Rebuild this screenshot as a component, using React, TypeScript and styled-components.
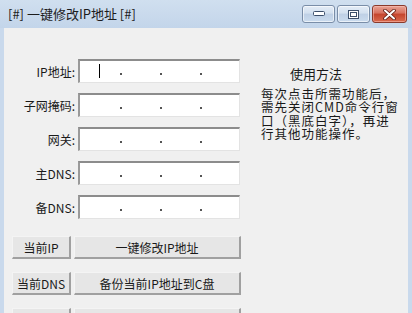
import styled, { createGlobalStyle } from 'styled-components';

const GlobalStyle = createGlobalStyle`
  html, body {
    margin: 0;
    padding: 0;
    background: #f0f0f0;
  }
  body {
    font-family: "Noto Sans CJK SC", "DejaVu Sans", sans-serif;
    font-size: 12px;
    color: #1a1a1a;
  }
`;

const fields = ['IP地址:', '子网掩码:', '网关:', '主DNS:', '备DNS:'];

const helpLines = [
  '每次点击所需功能后，',
  '需先关闭CMD命令行窗',
  '口（黑底白字），再进',
  '行其他功能操作。',
];

const App = () => {
  return (
    <>
      <GlobalStyle />
      <Window>
        <TitleBar>
          <Title>[#] 一键修改IP地址 [#]</Title>
          <Controls>
            <CtrlButton>
              <svg width="12" height="6" viewBox="0 0 12 6">
                <rect x="0.5" y="0.5" width="11" height="4" rx="1" fill="#fff" stroke="#3c4f6a" />
              </svg>
            </CtrlButton>
            <CtrlButton>
              <svg width="11" height="9" viewBox="0 0 11 9">
                <rect x="0.5" y="0.5" width="10" height="8" fill="#fff" stroke="#3c4f6a" />
                <rect x="2.5" y="2.5" width="6" height="4" fill="none" stroke="#3c4f6a" />
              </svg>
            </CtrlButton>
            <CloseButton>
              <svg width="13" height="11" viewBox="0 0 13 11">
                <path d="M2 1.5 L11 9.5 M11 1.5 L2 9.5" stroke="#5a1a10" strokeWidth="3.6" strokeLinecap="round" />
                <path d="M2 1.5 L11 9.5 M11 1.5 L2 9.5" stroke="#fff" strokeWidth="2" strokeLinecap="round" />
              </svg>
            </CloseButton>
          </Controls>
        </TitleBar>
        <Client>
          <LeftCol>
            <Form>
              {fields.map((label, i) => (
                <FieldRow key={label}>
                  <Label>{label}</Label>
                  <IpBox>
                    {i === 0 && <Caret />}
                    <Dot />
                    <Dot />
                    <Dot />
                  </IpBox>
                </FieldRow>
              ))}
            </Form>
            <Buttons>
              <ButtonRow>
                <SmallButton>当前IP</SmallButton>
                <WideButton>一键修改IP地址</WideButton>
              </ButtonRow>
              <ButtonRow>
                <SmallButton>当前DNS</SmallButton>
                <WideButton>备份当前IP地址到C盘</WideButton>
              </ButtonRow>
              <ButtonRow>
                <SmallButton />
                <WideButton />
              </ButtonRow>
            </Buttons>
          </LeftCol>
          <Help>
            <HelpTitle>使用方法</HelpTitle>
            <HelpText>
              {helpLines.map((line) => (
                <HelpLine key={line}>{line}</HelpLine>
              ))}
            </HelpText>
          </Help>
        </Client>
      </Window>
    </>
  );
};

export default App;

const Window = styled.div`
  width: 412px;
  height: 313px;
  overflow: hidden;
  display: flex;
  flex-direction: column;
  background: #c9d9ec;
  box-sizing: border-box;
`;

const TitleBar = styled.div`
  height: 28px;
  flex: none;
  display: flex;
  align-items: flex-start;
  justify-content: space-between;
  background: linear-gradient(#d0dfef, #c3d5ea);
  padding: 0 4px 0 8px;
`;

const Title = styled.div`
  margin-top: 5px;
  font-size: 13px;
  line-height: 18px;
  color: #1c1c1c;
`;

const Controls = styled.div`
  display: flex;
  gap: 2px;
  margin-top: 5px;
  margin-right: 1px;
`;

const CtrlButton = styled.div`
  width: 33px;
  height: 18px;
  box-sizing: border-box;
  border: 1px solid #7a8ea8;
  border-radius: 3px;
  background: linear-gradient(#e4edf7 0%, #d3e0ef 45%, #bfd0e5 50%, #cbdcee 100%);
  display: flex;
  align-items: center;
  justify-content: center;
  box-shadow: inset 0 0 0 1px rgba(255, 255, 255, 0.6);
`;

const CloseButton = styled(CtrlButton)`
  width: 35px;
  border-color: #8a3a2c;
  background: linear-gradient(#e8a496 0%, #d7705d 45%, #c4442c 50%, #d96a4e 100%);
  box-shadow: inset 0 0 0 1px rgba(255, 200, 190, 0.5);
`;

const Client = styled.div`
  flex: 1;
  margin: 0 4px;
  background: #f0f0f0;
  display: flex;
`;

const LeftCol = styled.div`
  width: 238px;
  flex: none;
  display: flex;
  flex-direction: column;
  padding-left: 8px;
`;

const Form = styled.div`
  display: flex;
  flex-direction: column;
  gap: 10px;
  padding-top: 31px;
`;

const FieldRow = styled.div`
  display: flex;
  align-items: center;
  height: 24px;
`;

const Label = styled.div`
  width: 63px;
  text-align: right;
  font-size: 12px;
  color: #1a1a1a;
  padding-right: 3px;
  white-space: nowrap;
`;

const IpBox = styled.div`
  position: relative;
  width: 162px;
  height: 24px;
  box-sizing: border-box;
  background: #fff;
  border-top: 2px solid #8c8c8c;
  border-left: 2px solid #9a9a9a;
  border-right: 1px solid #e3e3e3;
  border-bottom: 1px solid #e3e3e3;
  display: flex;
  align-items: center;
  padding-left: 40px;
  gap: 38px;
`;

const Caret = styled.div`
  position: absolute;
  left: 19px;
  top: 3px;
  width: 1px;
  height: 14px;
  background: #000;
`;

const Dot = styled.div`
  width: 2px;
  height: 2px;
  margin-top: 4px;
  background: #555;
`;

const Buttons = styled.div`
  display: flex;
  flex-direction: column;
  gap: 13px;
  margin-top: 17px;
`;

const ButtonRow = styled.div`
  display: flex;
  gap: 3px;
`;

const BaseButton = styled.div`
  height: 23px;
  box-sizing: border-box;
  background: #e6e6e6;
  border-top: 1px solid #f4f4f4;
  border-left: 1px solid #f4f4f4;
  border-right: 2px solid #a0a0a0;
  border-bottom: 2px solid #a0a0a0;
  display: flex;
  align-items: center;
  justify-content: center;
  font-size: 12px;
  color: #1a1a1a;
  white-space: nowrap;
`;

const SmallButton = styled(BaseButton)`
  width: 59px;
`;

const WideButton = styled(BaseButton)`
  width: 167px;
`;

const Help = styled.div`
  flex: 1;
  padding-top: 38px;
  padding-left: 11px;
  display: flex;
  flex-direction: column;
`;

const HelpTitle = styled.div`
  width: 110px;
  text-align: center;
  font-size: 13px;
  line-height: 16px;
  color: #1a1a1a;
`;

const HelpText = styled.div`
  margin-top: 5px;
  font-size: 12.5px;
  letter-spacing: 1px;
  line-height: 13.4px;
  color: #1a1a1a;
`;

const HelpLine = styled.div`
  white-space: nowrap;
  height: 13.4px;
`;
